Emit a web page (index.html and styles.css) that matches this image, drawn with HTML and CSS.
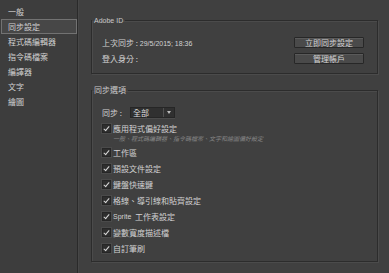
FILE: index.html
```html
<!DOCTYPE html>
<html lang="zh-Hant">
<head>
    <meta charset="UTF-8">
    <title>偏好設定</title>
    <link rel="stylesheet" href="styles.css">
</head>
<body>
    <div class="window">
        <!-- Category list -->
        <ul class="sidebar">
            <li>一般</li>
            <li class="active">同步設定</li>
            <li>程式碼編輯器</li>
            <li>指令碼檔案</li>
            <li>編譯器</li>
            <li>文字</li>
            <li>繪圖</li>
        </ul>

        <div class="main">
            <!-- Adobe ID -->
            <fieldset class="group">
                <legend><span class="lat">Adobe ID</span></legend>
                <div class="account">
                    <div class="account-row">
                        <span>上次同步 : <span class="lat">29/5/2015; 18:36</span></span>
                        <button class="btn">立即同步設定</button>
                    </div>
                    <div class="account-row">
                        <span>登入身分 :</span>
                        <button class="btn">管理帳戶</button>
                    </div>
                </div>
            </fieldset>

            <!-- Sync options -->
            <fieldset class="group options">
                <legend>同步選項</legend>
                <div class="options-body">
                    <div class="sync-row">
                        <span>同步 :</span>
                        <div class="dropdown">
                            <span class="dropdown-value">全部</span>
                            <span class="dropdown-arrow"></span>
                        </div>
                    </div>

                    <label class="check first"><span class="box"></span>應用程式偏好設定</label>
                    <div class="hint">一般、程式碼編輯器、指令碼檔案、文字和繪圖偏好設定</div>

                    <label class="check"><span class="box"></span>工作區</label>
                    <label class="check"><span class="box"></span>預設文件設定</label>
                    <label class="check"><span class="box"></span>鍵盤快速鍵</label>
                    <label class="check"><span class="box"></span>格線、導引線和貼齊設定</label>
                    <label class="check"><span class="box"></span><span class="lat">Sprite</span>&nbsp;工作表設定</label>
                    <label class="check"><span class="box"></span>變數寬度描述檔</label>
                    <label class="check"><span class="box"></span>自訂筆刷</label>
                </div>
            </fieldset>
        </div>
    </div>
</body>
</html>
```

FILE: styles.css
```css
body {
    margin: 0;
    background-color: #404040;
    color: #d2d2d2;
    font-family: "Noto Sans CJK TC", "Liberation Sans", sans-serif;
    font-size: 8px;
}
.window {
    display: flex;
    height: 273px;
}
.lat {
    font-family: "Liberation Sans", sans-serif;
    font-size: 7px;
}
.sidebar {
    list-style: none;
    margin: 0;
    padding: 4px 0 0 1px;
    width: 76px;
    background-color: #3d3d3d;
    border-right: 1px solid #2a2a2a;
    box-shadow: 1px 0 0 #474747;
}
.sidebar li {
    height: 15px;
    line-height: 15px;
    padding-left: 7px;
    box-sizing: border-box;
}
.sidebar li.active {
    border: 1px solid #727272;
    background-color: #474747;
    line-height: 13px;
    padding-left: 6px;
}
.main {
    flex: 1;
    padding: 15px 11px 0 13px;
}
.group {
    margin: 0;
    padding: 0;
    border: 1px solid #2c2c2c;
    box-shadow: 1px 1px 0 #4b4b4b, inset 1px 1px 0 #4b4b4b;
}
.group legend {
    margin-left: 0;
    padding: 0 2px;
    line-height: 10px;
    color: #c8c8c8;
}
.account {
    display: flex;
    flex-direction: column;
    gap: 5px;
    padding: 11px 13px 9px 10px;
}
.account-row {
    display: flex;
    justify-content: space-between;
    align-items: center;
    height: 11px;
}
.btn {
    width: 70px;
    height: 11px;
    padding: 0;
    font-family: inherit;
    font-size: 8px;
    line-height: 9px;
    color: #d4d4d4;
    background-color: #4a4a4a;
    border: 1px solid #272727;
    border-radius: 1px;
    box-shadow: inset 0 1px 0 #5a5a5a;
}
.options {
    margin-top: 11px;
}
.options-body {
    padding: 0 0 5px 10px;
}
.sync-row {
    display: flex;
    align-items: center;
    gap: 8px;
    height: 11px;
    margin-top: 12px;
}
.dropdown {
    display: flex;
    width: 45px;
    height: 11px;
    box-sizing: border-box;
    background-color: #303030;
    border: 1px solid #262626;
    box-shadow: 0 1px 0 #4c4c4c;
}
.dropdown-value {
    flex: 1;
    padding-left: 2px;
    line-height: 9px;
    color: #dcdcdc;
}
.dropdown-arrow {
    width: 10px;
    border-left: 1px solid #505050;
    position: relative;
}
.dropdown-arrow::after {
    content: "";
    position: absolute;
    left: 3px;
    top: 3px;
    border-left: 2px solid transparent;
    border-right: 2px solid transparent;
    border-top: 3px solid #bdbdbd;
}
.check {
    display: flex;
    align-items: center;
    gap: 2px;
    height: 16px;
}
.check.first {
    height: 14px;
    margin-top: 3px;
}
.box {
    width: 9px;
    height: 9px;
    box-sizing: border-box;
    background-color: #2e2e2e;
    border: 1px solid #262626;
    box-shadow: 0 0 0 1px #4a4a4a;
    position: relative;
}
.box::after {
    content: "";
    position: absolute;
    left: 2px;
    top: 0;
    width: 2px;
    height: 5px;
    border-right: 1px solid #d8d8d8;
    border-bottom: 1px solid #d8d8d8;
    transform: rotate(40deg);
}
.hint {
    height: 8px;
    line-height: 8px;
    padding-left: 11px;
    font-size: 6px;
    font-style: italic;
    color: #858585;
    margin-bottom: 1px;
}
```
